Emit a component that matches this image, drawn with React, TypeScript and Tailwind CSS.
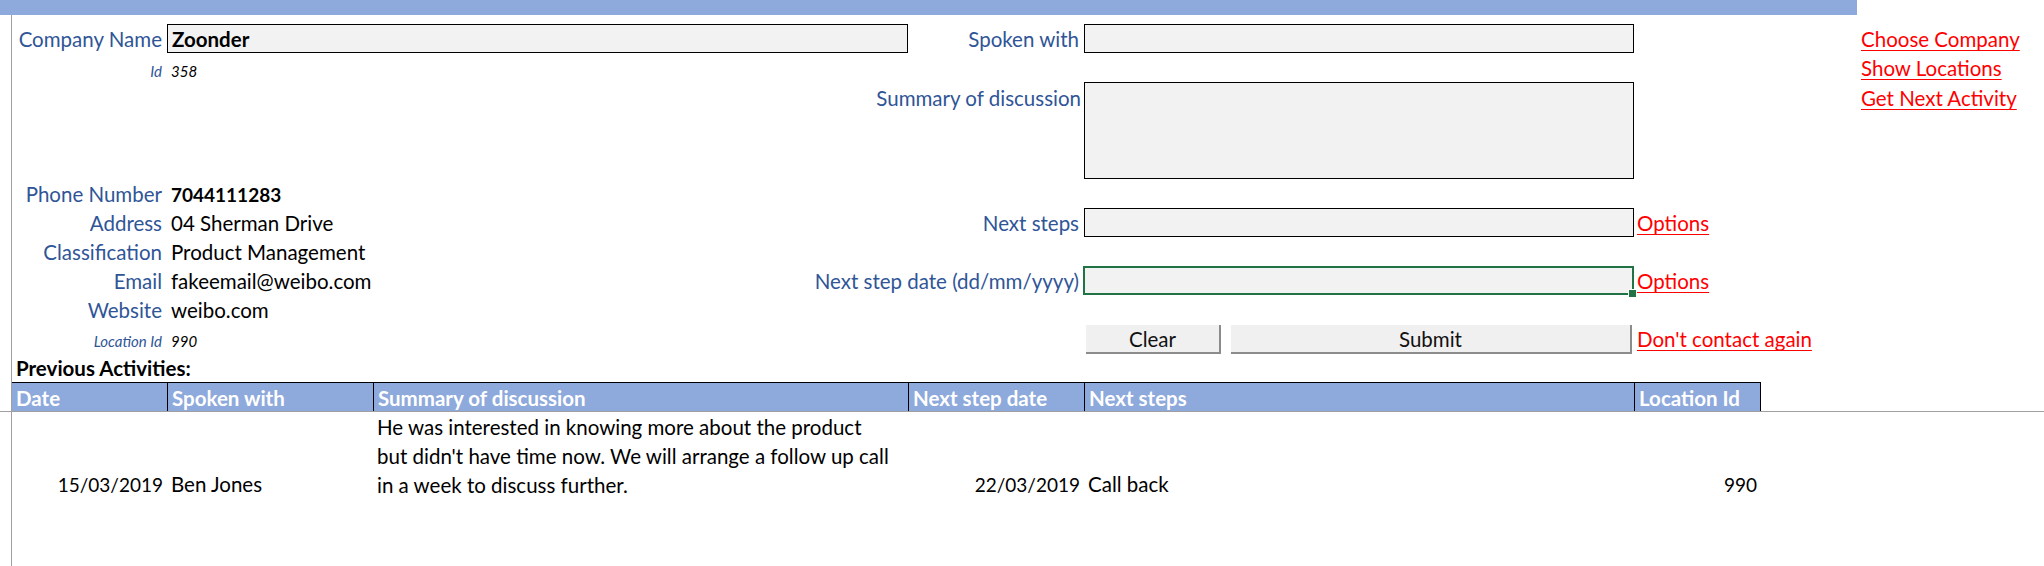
import React from "react";

const LBL = "flex items-center justify-end whitespace-nowrap pt-[2px] pr-[5px] text-[#2F5597]";
const VAL = "flex items-center whitespace-nowrap pt-[2px] pl-[4px] text-black";
const LINK = "flex items-center whitespace-nowrap pt-[2px] text-[#FF0000] underline decoration-1 underline-offset-[3px]";
const INPUT = "border border-black bg-[#F2F2F2]";
const HEAD = "flex items-center whitespace-nowrap bg-[#8EA9DB] border-t border-black pt-[2px] pl-[4px] font-bold text-white row-start-13";

export default function App() {
  return (
    <div className="relative h-[566px] w-[2044px] overflow-hidden bg-white font-['Lato','Liberation_Sans',sans-serif] text-[20.5px] leading-none text-black">
      <div className="grid h-full grid-cols-[12px_155px_206px_535px_176px_550px_127px_96px_187px] grid-rows-[15px_9px_29px_29px_97px_29px_29px_29px_29px_29px_29px_29px_29px_88px_1fr]">
        {/* top bar */}
        <div className="col-start-1 col-span-8 row-start-1 bg-[#8EA9DB]" />

        {/* Row: company / spoken with */}
        <div className={`${LBL} col-start-2 row-start-3`}>Company Name</div>
        <div className={`${INPUT} ${VAL} col-start-3 col-span-2 row-start-3 font-bold`}>Zoonder</div>
        <div className={`${LBL} col-start-5 row-start-3 pr-[3px]`}>Spoken with</div>
        <div className={`${INPUT} col-start-6 row-start-3`} />
        <div className={`${LINK} col-start-9 row-start-3 pl-[4px]`}>Choose Company</div>

        {/* Row: id */}
        <div className="col-start-2 row-start-4 flex items-end justify-end pb-[3px] pr-[5px] text-[15px] italic text-[#2F5597]">Id</div>
        <div className="col-start-3 row-start-4 flex items-end pb-[3px] pl-[4px] text-[15px] italic">358</div>
        <div className={`${LINK} col-start-9 row-start-4 pl-[4px]`}>Show Locations</div>

        {/* Row: summary */}
        <div className="col-start-5 row-start-5 flex h-[33px] items-center justify-end whitespace-nowrap pr-[3px] text-[#2F5597]">Summary of discussion</div>
        <div className={`${INPUT} col-start-6 row-start-5`} />
        <div className="col-start-9 row-start-5 flex h-[33px] items-center whitespace-nowrap pl-[4px] text-[#FF0000] underline decoration-1 underline-offset-[3px]">Get Next Activity</div>

        {/* details */}
        <div className={`${LBL} col-start-2 row-start-6`}>Phone Number</div>
        <div className={`${VAL} col-start-3 row-start-6 text-[19px] font-bold`}>7044111283</div>

        <div className={`${LBL} col-start-2 row-start-7`}>Address</div>
        <div className={`${VAL} col-start-3 row-start-7`}>04 Sherman Drive</div>
        <div className={`${LBL} col-start-5 row-start-7 pr-[3px]`}>Next steps</div>
        <div className={`${INPUT} col-start-6 row-start-7`} />
        <div className={`${LINK} col-start-7 row-start-7 pl-[3px]`}>Options</div>

        <div className={`${LBL} col-start-2 row-start-8`}>Classification</div>
        <div className={`${VAL} col-start-3 row-start-8`}>Product Management</div>

        <div className={`${LBL} col-start-2 row-start-9`}>Email</div>
        <div className={`${VAL} col-start-3 row-start-9`}>fakeemail@weibo.com</div>
        <div className={`${LBL} col-start-5 row-start-9 pr-[3px]`}>Next step date (dd/mm/yyyy)</div>
        <div className="relative col-start-6 row-start-9 -ml-px border-2 border-[#217346] bg-[#F2F2F2]">
          <div className="absolute -bottom-[4px] -right-[4px] h-[7px] w-[7px] bg-[#217346] ring-1 ring-white" />
        </div>
        <div className={`${LINK} col-start-7 row-start-9 pl-[3px]`}>Options</div>

        <div className={`${LBL} col-start-2 row-start-10`}>Website</div>
        <div className={`${VAL} col-start-3 row-start-10`}>weibo.com</div>

        <div className="col-start-2 row-start-11 flex items-end justify-end pb-[4px] pr-[5px] text-[15px] italic text-[#2F5597]">Location Id</div>
        <div className="col-start-3 row-start-11 flex items-end pb-[4px] pl-[4px] text-[15px] italic">990</div>
        <div className="col-start-6 row-start-11 flex items-start gap-[10px] pl-[2px] pr-[2px] pt-[1px]">
          <button className="flex h-[29px] w-[135px] items-center justify-center border-b-2 border-r-2 border-[#8c8c8c] bg-[#F0F0F0] pt-[2px] text-[#111]">Clear</button>
          <button className="flex h-[29px] flex-1 items-center justify-center border-b-2 border-r-2 border-[#8c8c8c] bg-[#F0F0F0] pt-[2px] text-[#111]">Submit</button>
        </div>
        <div className={`${LINK} col-start-7 row-start-11 pl-[3px]`}>Don't contact again</div>

        <div className="col-start-2 row-start-12 flex items-center whitespace-nowrap pl-[4px] pt-[2px] font-bold">Previous Activities:</div>

        {/* header */}
        <div className={`${HEAD} col-start-2`}>Date</div>
        <div className={`${HEAD} col-start-3 border-l`}>Spoken with</div>
        <div className={`${HEAD} col-start-4 border-l`}>Summary of discussion</div>
        <div className={`${HEAD} col-start-5 border-l`}>Next step date</div>
        <div className={`${HEAD} col-start-6 border-l`}>Next steps</div>
        <div className={`${HEAD} col-start-7 border-l border-r`}>Location Id</div>

        {/* data row */}
        <div className="col-start-2 row-start-14 flex items-end justify-end pr-[4px] text-[19px] leading-[29px]">15/03/2019</div>
        <div className="col-start-3 row-start-14 flex items-end pl-[4px] leading-[29px]">Ben Jones</div>
        <div className="col-start-4 row-start-14 flex flex-col whitespace-nowrap pl-[4px] pt-[2px] leading-[29px]">
          <span>He was interested in knowing more about the product</span>
          <span>but didn't have time now. We will arrange a follow up call</span>
          <span>in a week to discuss further.</span>
        </div>
        <div className="col-start-5 row-start-14 flex items-end justify-end pr-[4px] text-[19px] leading-[29px]">22/03/2019</div>
        <div className="col-start-6 row-start-14 flex items-end pl-[4px] leading-[29px]">Call back</div>
        <div className="col-start-7 row-start-14 flex items-end justify-end pr-[4px] text-[19px] leading-[29px]">990</div>
      </div>

      {/* frozen pane dividers */}
      <div className="pointer-events-none absolute bottom-0 left-[11px] top-[15px] w-px bg-[#A0A0A0]" />
      <div className="pointer-events-none absolute left-0 right-0 top-[411px] h-px bg-[#A0A0A0]" />
    </div>
  );
}
